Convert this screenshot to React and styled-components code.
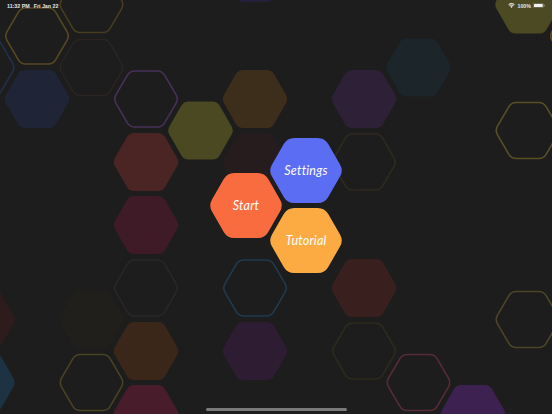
import React from "react";
import styled, { createGlobalStyle } from "styled-components";

const GlobalStyle = createGlobalStyle`
  html, body { margin: 0; padding: 0; background: #1d1d1d; }
  body { font-family: "Liberation Sans", Arial, sans-serif; }
  * { box-sizing: border-box; }
`;

const toward = (p, q, r) => {
  const dx = q[0] - p[0];
  const dy = q[1] - p[1];
  const len = Math.hypot(dx, dy);
  return `${(p[0] + (dx / len) * r).toFixed(2)},${(p[1] + (dy / len) * r).toFixed(2)}`;
};

const hexPath = (cx, cy, w, h, r) => {
  const pts = [
    [cx - w / 2, cy],
    [cx - w / 4, cy - h / 2],
    [cx + w / 4, cy - h / 2],
    [cx + w / 2, cy],
    [cx + w / 4, cy + h / 2],
    [cx - w / 4, cy + h / 2],
  ];
  let d = "";
  pts.forEach((p, i) => {
    const prev = pts[(i + 5) % 6];
    const next = pts[(i + 1) % 6];
    d += `${i === 0 ? "M" : "L"}${toward(p, prev, r)} Q${p[0].toFixed(2)},${p[1].toFixed(2)} ${toward(p, next, r)} `;
  });
  return d + "Z";
};

const BTN_W = 75;
const BTN_H = 65;
const BTN_CLIP = hexPath(BTN_W / 2, BTN_H / 2, BTN_W, BTN_H, 7);

const BG_W = 67;
const BG_H = 58;

const filled = [
  [200.5, 130.5, "#4a4922"],
  [255, 99, "#3c2e1a"],
  [146, 162, "#4a2524"],
  [146, 225, "#3e1b27"],
  [37, 99, "#1f2536"],
  [364, 99, "#2e2036"],
  [418.5, 67.5, "#1b252a"],
  [527.5, 4.5, "#4c4a23"],
  [364, 288, "#39201f"],
  [255, 351, "#2e1c33"],
  [146, 351, "#3a2719"],
  [146, 414, "#481c2a"],
  [473, 414, "#3d2150"],
  [-17.5, 382.5, "#1d3243"],
  [-17.5, 319.5, "#2e1c1d"],
  [91.5, 319.5, "#211f1b"],
  [255, 162, "#261b1d"],
  [255, -27, "#22203a"],
];

const outlined = [
  [37, 36, "#584724"],
  [91.5, 4.5, "#483c20"],
  [146, 99, "#48305a"],
  [91.5, 67.5, "#2a2422"],
  [-17.5, 67.5, "#22304e"],
  [582, 36, "#6a4a22"],
  [527.5, 130.5, "#584f26"],
  [364, 162, "#2f2a1e"],
  [146, 288, "#282828"],
  [364, 351, "#2e2a1d"],
  [418.5, 382.5, "#582b3a"],
  [527.5, 319.5, "#4e4427"],
  [255, 288, "#203a4e"],
  [91.5, 382.5, "#494321"],
];

const Screen = styled.div`
  position: relative;
  width: 552px;
  height: 414px;
  overflow: hidden;
  background: #1d1d1d;
  display: flex;
  flex-direction: column;
`;

const Backdrop = styled.svg`
  position: absolute;
  inset: 0;
  width: 552px;
  height: 414px;
  z-index: 0;
`;

const StatusBar = styled.div`
  position: relative;
  z-index: 1;
  height: 11px;
  padding: 0 7px;
  display: flex;
  align-items: center;
  justify-content: space-between;
  color: #e6e6e6;
  font-family: "Liberation Sans", Arial, sans-serif;
  font-size: 5.3px;
  font-weight: 600;
`;

const StatusGroup = styled.div`
  display: flex;
  align-items: center;
  gap: ${(p) => p.$gap || 4}px;
`;

const Main = styled.main`
  position: relative;
  z-index: 1;
  flex: 1;
  display: flex;
  align-items: center;
  justify-content: center;
`;

const Cluster = styled.div`
  display: flex;
  align-items: center;
`;

const Column = styled.div`
  display: flex;
  flex-direction: column;
  gap: 5px;
  margin-left: -15px;
`;

const HexButton = styled.button`
  width: ${BTN_W}px;
  height: ${BTN_H}px;
  border: none;
  padding: 0;
  margin: 0;
  background: ${(p) => p.$color};
  clip-path: path("${BTN_CLIP}");
  color: #ffffff;
  font-family: Lato, "Open Sans", sans-serif;
  font-style: italic;
  font-size: 12.5px;
  letter-spacing: 0.2px;
  display: flex;
  align-items: center;
  justify-content: center;
  cursor: pointer;
`;

const HomeArea = styled.div`
  position: relative;
  z-index: 1;
  height: 14px;
  display: flex;
  justify-content: center;
  padding-top: 8px;
`;

const HomeIndicator = styled.div`
  width: 141px;
  height: 3px;
  border-radius: 2px;
  background: #7a7a7a;
`;

const Wifi = () => (
  <svg width="7" height="5" viewBox="0 0 14 10">
    <path d="M7 10 L4.5 7 A3.6 3.6 0 0 1 9.5 7 Z" fill="#e6e6e6" />
    <path d="M2.6 5.2 A6.4 6.4 0 0 1 11.4 5.2 L10.3 6.4 A4.8 4.8 0 0 0 3.7 6.4 Z" fill="#e6e6e6" />
    <path d="M0.6 3.1 A9.4 9.4 0 0 1 13.4 3.1 L12.3 4.3 A7.8 7.8 0 0 0 1.7 4.3 Z" fill="#e6e6e6" />
  </svg>
);

const Battery = () => (
  <svg width="12" height="5" viewBox="0 0 24 10">
    <rect x="0.5" y="0.5" width="20.5" height="9" rx="2.2" fill="none" stroke="#9a9a9a" strokeWidth="1" />
    <rect x="2" y="2" width="17.5" height="6" rx="1.2" fill="#f2f2f2" />
    <rect x="22" y="3.3" width="1.6" height="3.4" rx="0.7" fill="#9a9a9a" />
  </svg>
);

export default function App() {
  return (
    <>
      <GlobalStyle />
      <Screen>
        <Backdrop viewBox="0 0 552 414">
          {filled.map(([x, y, c], i) => (
            <path key={`f${i}`} d={hexPath(x, y, BG_W, BG_H, 5)} fill={c} />
          ))}
          {outlined.map(([x, y, c], i) => (
            <path
              key={`o${i}`}
              d={hexPath(x, y, BG_W - 2, BG_H - 2, 5)}
              fill="none"
              stroke={c}
              strokeWidth="1.6"
            />
          ))}
        </Backdrop>
        <StatusBar>
          <StatusGroup $gap={4}>
            <span>11:32 PM</span>
            <span>Fri Jan 22</span>
          </StatusGroup>
          <StatusGroup $gap={2}>
            <Wifi />
            <span>100%</span>
            <Battery />
          </StatusGroup>
        </StatusBar>
        <Main>
          <Cluster>
            <HexButton $color="#f96c3f">Start</HexButton>
            <Column>
              <HexButton $color="#5a6df3">Settings</HexButton>
              <HexButton $color="#fcab43">Tutorial</HexButton>
            </Column>
          </Cluster>
        </Main>
        <HomeArea>
          <HomeIndicator />
        </HomeArea>
      </Screen>
    </>
  );
}
